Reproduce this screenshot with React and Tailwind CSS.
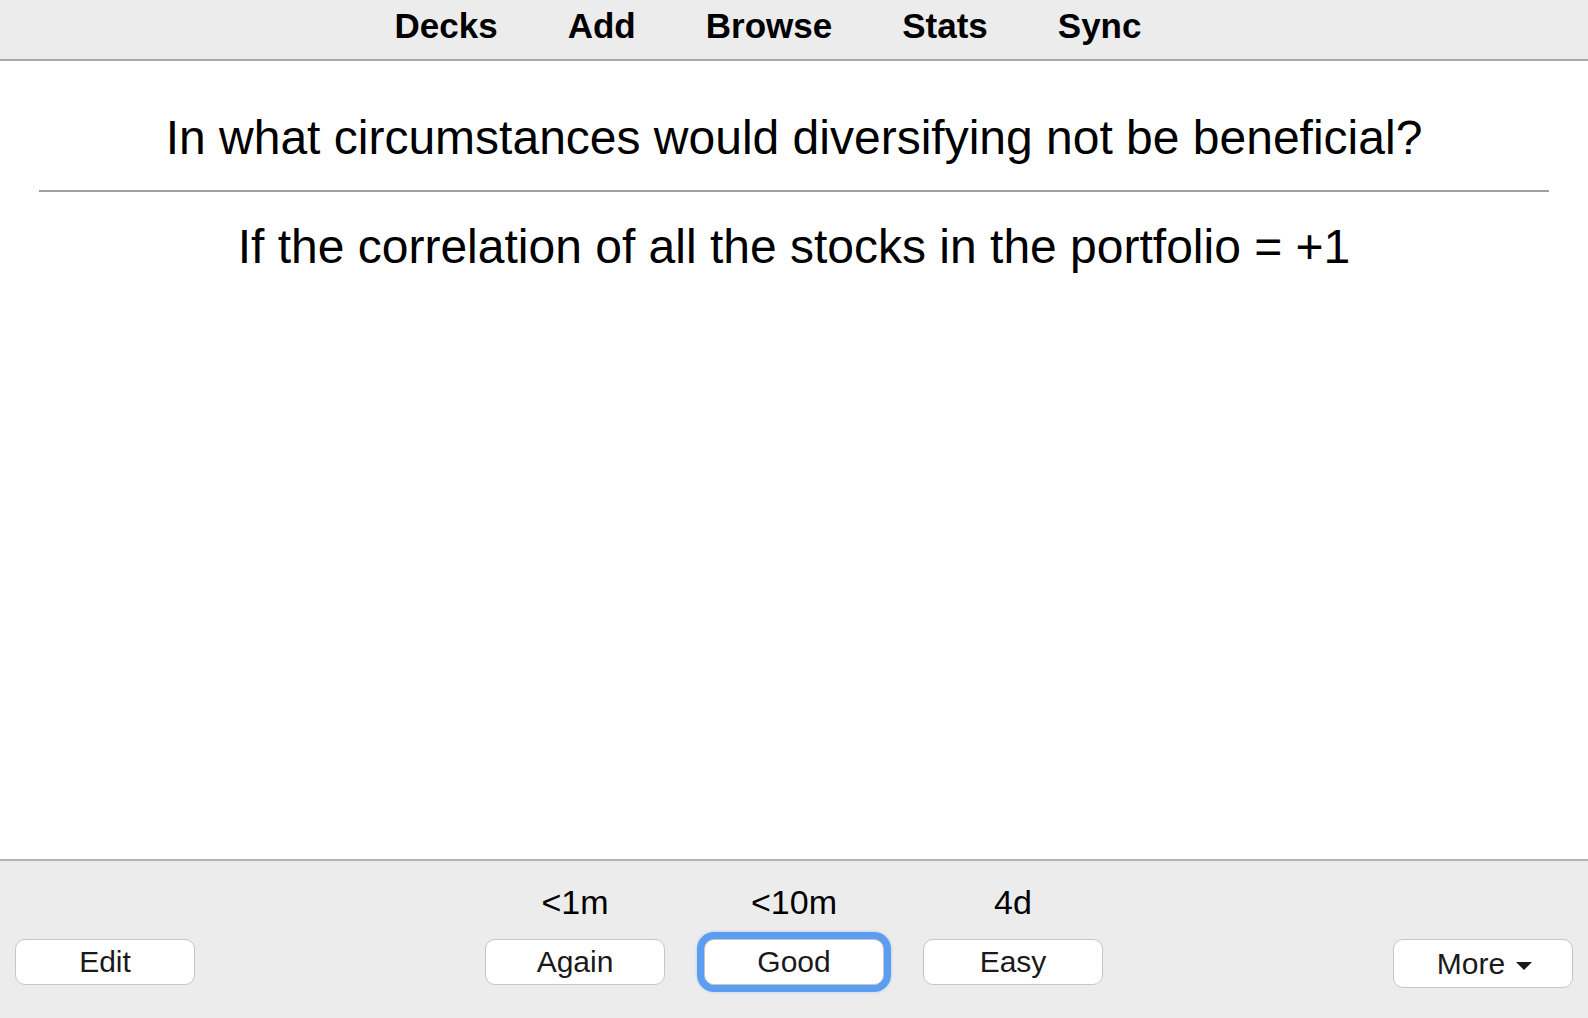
export default function App() {
  const intervals = [
    { label: "<1m", name: "Again" },
    { label: "<10m", name: "Good", focused: true },
    { label: "4d", name: "Easy" },
  ];

  return (
    <div className="h-screen flex flex-col bg-white text-black font-['Liberation_Sans',Arial,sans-serif] overflow-hidden">
      {/* Top bar */}
      <nav className="h-[61px] shrink-0 bg-[#ececec] border-b-2 border-[#a8a8a8] flex items-center justify-center gap-[70px] pr-[52px] pb-[6px] text-[35px] font-bold">
        <span>Decks</span>
        <span>Add</span>
        <span>Browse</span>
        <span>Stats</span>
        <span>Sync</span>
      </nav>

      {/* Card */}
      <main className="flex-1 px-[39px]">
        <div className="mt-[49px] text-center text-[48px] leading-[56px]">
          In what circumstances would diversifying not be beneficial?
        </div>
        <hr className="mt-[24px] border-0 border-t-2 border-[#a0a0a0]" />
        <div className="mt-[27px] text-center text-[48px] leading-[56px]">
          If the correlation of all the stocks in the portfolio = +1
        </div>
      </main>

      {/* Answer bar */}
      <footer className="h-[159px] shrink-0 bg-[#ececec] border-t-2 border-[#b4b4b4] flex items-start px-[15px] pt-[21px]">
        <button className="mt-[57px] w-[180px] h-[46px] bg-white border border-[#c6c6c6] rounded-[10px] text-[30px] leading-none text-[#1a1a1a]">
          Edit
        </button>

        <div className="flex-1 flex justify-center gap-[39px]">
          {intervals.map((b) => (
            <div key={b.name} className="w-[180px] flex flex-col items-center">
              <div className="h-[40px] leading-[40px] text-[34px]">{b.label}</div>
              <button
                className={`mt-[17px] w-[180px] h-[46px] bg-white border border-[#c6c6c6] rounded-[10px] text-[30px] leading-none text-[#1a1a1a] ${
                  b.focused
                    ? "ring-[7px] ring-[#5b9df0] shadow-[0_0_3px_7px_rgba(91,157,240,0.45)]"
                    : ""
                }`}
              >
                {b.name}
              </button>
            </div>
          ))}
        </div>

        <button className="mt-[57px] w-[180px] h-[49px] bg-white border border-[#c6c6c6] rounded-[10px] text-[30px] leading-none text-[#1a1a1a] flex items-center justify-center gap-[10px] pl-[4px]">
          <span>More</span>
          <svg width="18" height="10" viewBox="0 0 18 10" className="mt-[4px]">
            <path d="M1 1h16L9 9z" fill="#1a1a1a" />
          </svg>
        </button>
      </footer>
    </div>
  );
}
